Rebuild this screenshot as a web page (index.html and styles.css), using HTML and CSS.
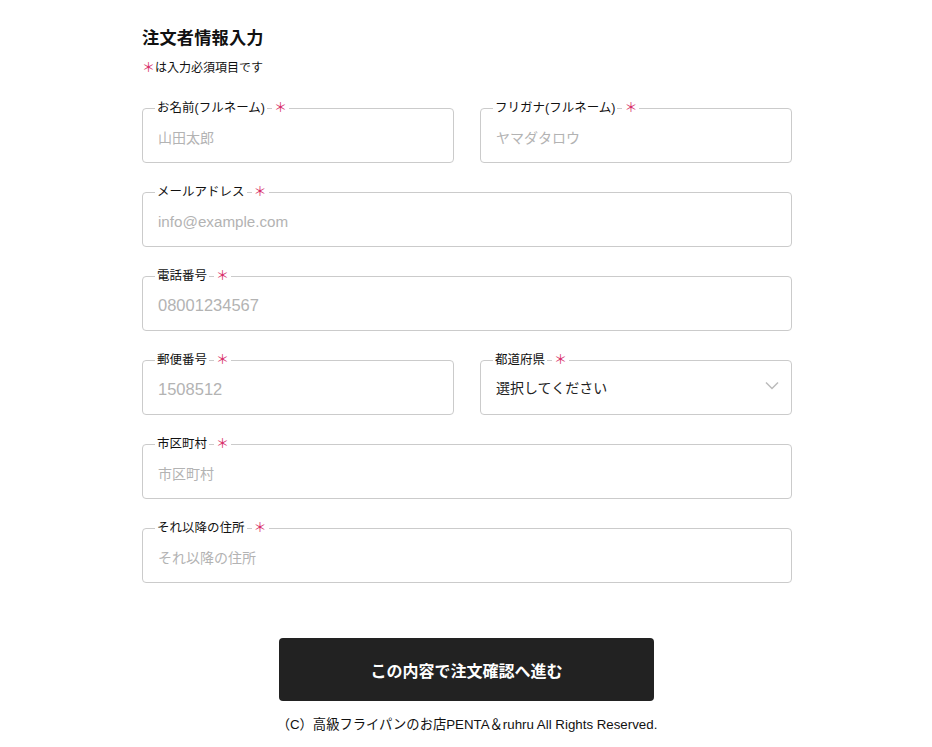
FILE: index.html
```html
<!DOCTYPE html>
<html lang="ja">
<head>
<meta charset="utf-8">
<title>注文者情報入力</title>
<link rel="stylesheet" href="styles.css">
</head>
<body>
<main class="page">
  <h1 class="title">注文者情報入力</h1>
  <p class="note"><span class="req">＊</span>は入力必須項目です</p>

  <div class="form">
    <div class="row two">
      <div class="field">
        <label class="label"><span class="ltext">お名前(フルネーム)</span><span class="req">＊</span></label>
        <div class="input placeholder">山田太郎</div>
      </div>
      <div class="field">
        <label class="label"><span class="ltext">フリガナ(フルネーム)</span><span class="req">＊</span></label>
        <div class="input placeholder">ヤマダタロウ</div>
      </div>
    </div>
    <div class="row">
      <div class="field">
        <label class="label"><span class="ltext">メールアドレス</span><span class="req">＊</span></label>
        <div class="input placeholder latin">info@example.com</div>
      </div>
    </div>
    <div class="row">
      <div class="field">
        <label class="label"><span class="ltext">電話番号</span><span class="req">＊</span></label>
        <div class="input placeholder num">08001234567</div>
      </div>
    </div>
    <div class="row two">
      <div class="field">
        <label class="label"><span class="ltext">郵便番号</span><span class="req">＊</span></label>
        <div class="input placeholder num">1508512</div>
      </div>
      <div class="field">
        <label class="label"><span class="ltext">都道府県</span><span class="req">＊</span></label>
        <div class="input select">
          <span>選択してください</span>
          <svg class="chev" width="14" height="9" viewBox="0 0 14 9"><path d="M1 1.5 L7 7.5 L13 1.5" fill="none" stroke="#bbb" stroke-width="1.5"/></svg>
        </div>
      </div>
    </div>
    <div class="row">
      <div class="field">
        <label class="label"><span class="ltext">市区町村</span><span class="req">＊</span></label>
        <div class="input placeholder">市区町村</div>
      </div>
    </div>
    <div class="row">
      <div class="field">
        <label class="label"><span class="ltext">それ以降の住所</span><span class="req">＊</span></label>
        <div class="input placeholder">それ以降の住所</div>
      </div>
    </div>
  </div>

  <div class="actions">
    <button class="submit" type="button">この内容で注文確認へ進む</button>
  </div>
  <p class="copy">（C）高級フライパンのお店PENTA＆ruhru All Rights Reserved.</p>
</main>
</body>
</html>
```

FILE: styles.css
```css
* { box-sizing: border-box; }
html, body { margin: 0; padding: 0; background: #fff; }
body {
  font-family: "Liberation Sans", "Noto Sans CJK JP", sans-serif;
  color: #111;
}
.page {
  width: 650px;
  margin-left: calc(50% - 324px);
  padding-top: 27px;
}
.title {
  margin: 0;
  font-size: 17.2px;
  font-weight: 700;
  line-height: 22px;
  letter-spacing: 0.2px;
}
.note {
  margin: 10px 0 0;
  font-size: 12px;
  line-height: 18px;
  display: flex;
  align-items: center;
}
.req {
  color: #d8306a;
  font-size: 13px;
  font-weight: 400;
}
.form {
  margin-top: 31px;
  display: flex;
  flex-direction: column;
  gap: 29px;
}
.row { display: flex; gap: 26px; }
.field { position: relative; flex: 1; }
.input {
  height: 55px;
  border: 1px solid #cbcbcb;
  border-radius: 4px;
  padding: 3px 15px 0;
  display: flex;
  align-items: center;
  font-size: 14px;
}
.placeholder { color: #b3b3b3; }
.latin { font-size: 15.2px; }
.num { font-size: 16.5px; }
.select { color: #222; justify-content: space-between; padding: 0 12px 2px 15px; }
.chev { margin-top: -2px; }
.label {
  position: absolute;
  top: -9px;
  left: 13px;
  display: flex;
  align-items: center;
  gap: 5px;
  font-size: 12.5px;
  line-height: 18px;
  color: #111;
}
.label .ltext, .label .req {
  background: #fff;
  padding: 0 2px;
}
.actions {
  margin-top: 55px;
  display: flex;
  justify-content: center;
}
.submit {
  width: 375px;
  height: 63px;
  margin-left: -1px;
  border: 0;
  border-radius: 4px;
  background: #222;
  color: #fff;
  font-family: "Liberation Sans", "Noto Sans CJK JP", sans-serif;
  font-size: 16px;
  font-weight: 700;
}
.copy {
  margin: 15px 0 0;
  text-align: center;
  font-size: 13.3px;
  line-height: 18px;
  color: #111;
}
```
